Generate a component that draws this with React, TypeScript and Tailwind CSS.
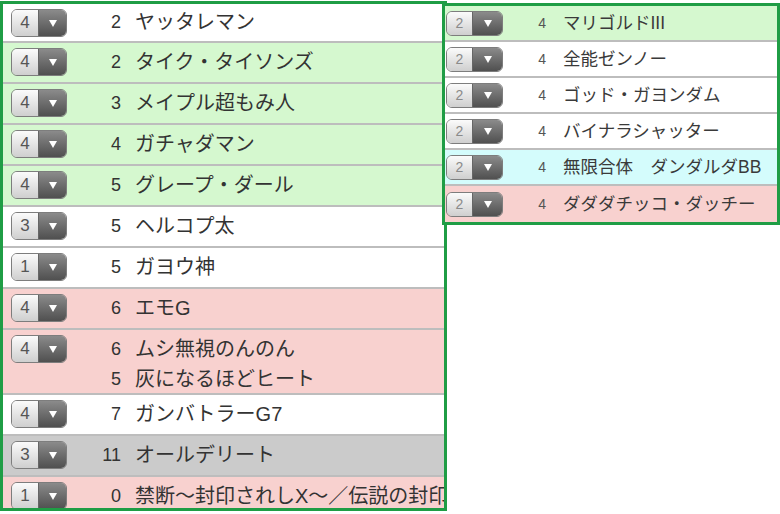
import React from "react";

type Tone = "white" | "green" | "pink" | "gray" | "cyan";

interface Entry {
  level: number;
  lines: { num: string; name: string }[];
  tone: Tone;
}

const toneBg: Record<Tone, string> = {
  white: "bg-white",
  green: "bg-[#d5f8cf]",
  pink: "bg-[#f8d1cf]",
  gray: "bg-[#cbcbcb]",
  cyan: "bg-[#d4fcfc]",
};

const leftRows: Entry[] = [
  { level: 4, tone: "white", lines: [{ num: "2", name: "ヤッタレマン" }] },
  { level: 4, tone: "green", lines: [{ num: "2", name: "タイク・タイソンズ" }] },
  { level: 4, tone: "green", lines: [{ num: "3", name: "メイプル超もみ人" }] },
  { level: 4, tone: "green", lines: [{ num: "4", name: "ガチャダマン" }] },
  { level: 4, tone: "green", lines: [{ num: "5", name: "グレープ・ダール" }] },
  { level: 3, tone: "white", lines: [{ num: "5", name: "ヘルコプ太" }] },
  { level: 1, tone: "white", lines: [{ num: "5", name: "ガヨウ神" }] },
  { level: 4, tone: "pink", lines: [{ num: "6", name: "エモG" }] },
  {
    level: 4,
    tone: "pink",
    lines: [
      { num: "6", name: "ムシ無視のんのん" },
      { num: "5", name: "灰になるほどヒート" },
    ],
  },
  { level: 4, tone: "white", lines: [{ num: "7", name: "ガンバトラーG7" }] },
  { level: 3, tone: "gray", lines: [{ num: "11", name: "オールデリート" }] },
  { level: 1, tone: "pink", lines: [{ num: "0", name: "禁断〜封印されしX〜／伝説の封印" }] },
];

const rightRows: { name: string; tone: Tone }[] = [
  { name: "マリゴルドIII", tone: "green" },
  { name: "全能ゼンノー", tone: "white" },
  { name: "ゴッド・ガヨンダム", tone: "white" },
  { name: "バイナラシャッター", tone: "white" },
  { name: "無限合体　ダンダルダBB", tone: "cyan" },
  { name: "ダダダチッコ・ダッチー", tone: "pink" },
];

const font = { fontFamily: '"Liberation Sans", "Noto Sans CJK JP", sans-serif' };

// little iOS-ish picker: light number cell + dark arrow cell
const Picker = ({ value, small }: { value: number; small?: boolean }) => (
  <div
    className={
      small
        ? "flex h-[25px] w-[57px] shrink-0 overflow-hidden rounded-[6px] border border-[#7d7d7d]"
        : "flex h-[28px] w-[56px] shrink-0 overflow-hidden rounded-[6px] border border-[#7d7d7d]"
    }
  >
    <div
      className={
        small
          ? "flex w-[25px] items-center justify-center bg-linear-to-b from-[#fbfbfb] to-[#cfcfcf] text-[14px] text-[#8a8a8a]"
          : "flex w-[26px] items-center justify-center bg-linear-to-b from-[#fbfbfb] to-[#cfcfcf] text-[17px] text-[#555]"
      }
    >
      {value}
    </div>
    <div className="flex flex-1 items-center justify-center border-l border-[#666] bg-linear-to-b from-[#8b8b8b] to-[#505050]">
      <div className="h-0 w-0 border-x-[4px] border-t-[7px] border-x-transparent border-t-white" />
    </div>
  </div>
);

const LeftRow = ({ row, first, last }: { row: Entry; first?: boolean; last?: boolean }) => {
  const tall = row.lines.length > 1;
  const h = first ? "h-[39px]" : tall ? "h-[65px]" : "h-[41px]";
  return (
    <div
      className={[
        "flex items-start pl-[8px]",
        toneBg[row.tone],
        last ? "" : "border-b-2 border-[#bdbdbd]",
        h,
      ].join(" ")}
    >
      <div className={first ? "pt-[5px]" : "pt-[5px]"}>
        <Picker value={row.level} />
      </div>
      <div className={first ? "pt-[3px]" : "pt-[4px]"}>
        {row.lines.map((l, i) => (
          <div key={i} className="flex h-[30px] items-center whitespace-nowrap text-[#333]">
            <span className="w-[54px] text-right text-[18px]">{l.num}</span>
            <span className="ml-[14px] text-[20px]">{l.name}</span>
          </div>
        ))}
      </div>
    </div>
  );
};

export default function App() {
  return (
    <div className="h-[514px] w-[780px] overflow-hidden bg-white" style={font}>
      <div className="flex items-start">
        <div className="mt-[1px] h-[510px] w-[447px] shrink-0 overflow-hidden border-[3px] border-[#1f9d45]">
          {leftRows.map((r, i) => (
            <LeftRow key={i} row={r} first={i === 0} last={i === leftRows.length - 1} />
          ))}
        </div>
        <div className="relative z-10 -ml-[5px] mt-[3px] w-[338px] border-[3px] border-[#1f9d45] bg-white">
          {rightRows.map((r, i) => (
            <div
              key={i}
              className={[
                "flex h-[36px] items-center pl-[1px]",
                toneBg[r.tone],
                i < rightRows.length - 1 ? "border-b-2 border-[#bdbdbd]" : "",
              ].join(" ")}
            >
              <Picker value={2} small />
              <span className="w-[43px] text-right text-[14px] text-[#555]">4</span>
              <span className="ml-[17px] whitespace-nowrap text-[17.5px] text-[#3a3a3a]">{r.name}</span>
            </div>
          ))}
        </div>
      </div>
    </div>
  );
}
